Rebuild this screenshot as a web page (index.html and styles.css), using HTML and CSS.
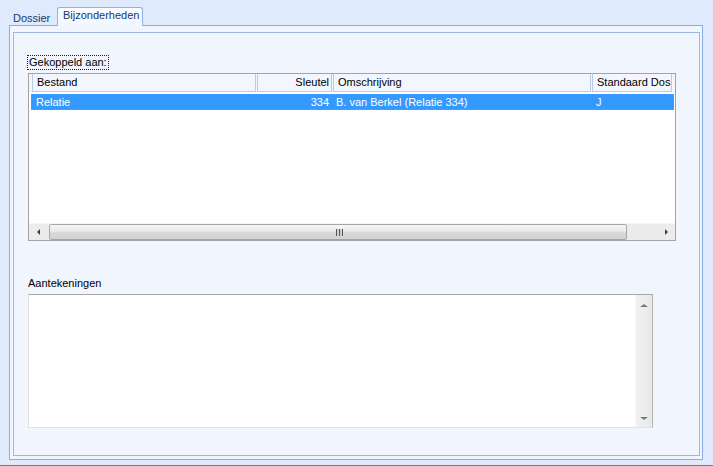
FILE: index.html
```html
<!DOCTYPE html>
<html>
<head>
<meta charset="utf-8">
<link rel="stylesheet" href="styles.css">
</head>
<body>
<div class="window">
  <div class="tabs">
    <div class="tab">Dossier</div>
    <div class="tab tab-active">Bijzonderheden</div>
  </div>
  <div class="panel">
    <div class="inner">
      <div class="group-label"><span class="focus">Gekoppeld aan:</span></div>
      <div class="list">
        <div class="list-header">
          <div class="hcell c1">Bestand</div>
          <div class="hcell c2 right">Sleutel</div>
          <div class="hcell c3">Omschrijving</div>
          <div class="hcell c4">Standaard Dos</div>
        </div>
        <div class="list-body">
          <div class="row selected">
            <div class="cell c1">Relatie</div>
            <div class="cell c2 right">334</div>
            <div class="cell c3">B. van Berkel (Relatie 334)</div>
            <div class="cell c4">J</div>
          </div>
        </div>
        <div class="hscroll">
          <div class="sbtn"><span class="arrow-left"></span></div>
          <div class="thumb"><span class="grip"></span></div>
          <div class="track"><span class="arrow-right"></span></div>
        </div>
      </div>
      <div class="notes-label">Aantekeningen</div>
      <div class="memo">
        <div class="memo-text"></div>
        <div class="vscroll">
          <span class="arrow-up"></span>
          <span class="arrow-down"></span>
        </div>
      </div>
    </div>
  </div>
</div>
</body>
</html>
```

FILE: styles.css
```css
* { box-sizing: border-box; }
html, body { margin: 0; padding: 0; }
body {
  font-family: "Liberation Sans", Arial, sans-serif;
  font-size: 11px;
  color: #000;
  background: #dfeafc;
}
.window {
  width: 713px;
  height: 466px;
  background: #dfeafc;
  border-bottom: 1px solid #5b7db3;
  overflow: hidden;
}
.tabs {
  height: 25px;
  display: flex;
  align-items: flex-end;
  padding-left: 9px;
}
.tab {
  height: 16px;
  padding: 3px 5px 0 4px;
  line-height: 13px;
  color: #15396f;
  width: 48px;
}
.tab-active {
  position: relative;
  z-index: 2;
  width: 86px;
  height: 19px;
  margin-bottom: -1px;
  padding: 1px 0 0 5px;
  border: 1px solid #8fb2e2;
  border-bottom: none;
  border-radius: 3px 3px 0 0;
  background: linear-gradient(#fbfdff, #f1f6ff);
}
.panel {
  margin: 0 10px 0 9px;
  height: 435px;
  border: 1px solid #8aaee0;
  background: #f1f6fe;
  padding: 6px 2px 3px 3px;
}
.inner {
  height: 424px;
  border: 1px solid #9ab9e4;
  background: #f0f5fe;
  padding: 22px 0 0 14px;
}
.group-label {
  height: 15px;
  margin-left: -1px;
}
.focus {
  display: inline-block;
  border: 1px dotted #222;
  padding: 0 1px 0 1px;
  line-height: 13px;
  height: 15px;
}
.list {
  margin-top: 3px;
  width: 648px;
  height: 168px;
  border: 1px solid #a3a3a3;
  background: #fff;
  display: flex;
  flex-direction: column;
}
.list-header {
  height: 18px;
  display: flex;
  gap: 1px;
  padding-left: 3px;
  background: #f3f7fd;
}
.hcell {
  height: 18px;
  border: 1px solid #b9cbe6;
  border-top: none;
  background: #f3f7fd;
  line-height: 16px;
  padding: 0 2px 0 4px;
  white-space: nowrap;
  overflow: hidden;
}
.c1 { width: 224px; }
.c2 { width: 75px; }
.c3 { width: 258px; }
.c4 { width: 80px; }
.right { text-align: right; }
.hcell.right { padding-right: 2px; }
.hcell.c4 { padding: 0 0 0 4px; }
.list-body {
  flex: 1;
  padding-top: 2px;
}
.row {
  display: flex;
  gap: 1px;
  height: 16px;
  margin: 0 1px 0 2px;
  border: 1px dotted #d9822b;
  background: #3399ff;
  color: #fff;
  line-height: 14px;
}
.row .cell {
  padding-left: 4px;
  white-space: nowrap;
  overflow: hidden;
}
.row .c1 { width: 223px; padding-left: 4px; }
.row .c2.right { padding-right: 2px; padding-left: 0; }
.row .c4 { padding-left: 5px; }
.hscroll {
  height: 17px;
  display: flex;
  background: #ebebeb;
  border-top: 1px solid #f5f5f5;
}
.sbtn {
  width: 20px;
  display: flex;
  align-items: center;
  justify-content: center;
  background: #ececec;
}
.arrow-left {
  width: 0; height: 0;
  border-top: 3px solid transparent;
  border-bottom: 3px solid transparent;
  border-right: 3px solid #3e3e3e;
  margin-right: 2px;
}
.arrow-right {
  width: 0; height: 0;
  border-top: 3px solid transparent;
  border-bottom: 3px solid transparent;
  border-left: 3px solid #3e3e3e;
  margin-right: 7px;
}
.thumb {
  width: 578px;
  height: 16px;
  border: 1px solid #a6a6a6;
  border-radius: 2px;
  background: linear-gradient(#f6f6f6 0%, #e9e9e9 45%, #d9d9d9 55%, #d2d2d2 100%);
  display: flex;
  align-items: center;
  justify-content: center;
}
.grip {
  width: 7px;
  height: 7px;
  margin-left: 2px;
  background: repeating-linear-gradient(90deg, #555 0 1px, #d0d0d0 1px 3px);
}
.track {
  flex: 1;
  display: flex;
  align-items: center;
  justify-content: flex-end;
  background: #ececec;
}
.notes-label {
  margin-top: 36px;
  height: 13px;
  line-height: 13px;
}
.memo {
  margin-top: 4px;
  width: 625px;
  height: 134px;
  display: flex;
  background: #fff;
  border-top: 1px solid #a8a8a8;
  border-right: 1px solid #b4b4b4;
  border-left: 1px solid #e1e1e1;
  border-bottom: 1px solid #e1e1e1;
}
.memo-text { flex: 1; }
.vscroll {
  width: 17px;
  background: linear-gradient(90deg, #f2f2f2, #e8e8e8);
  border-left: 1px solid #f6f6f6;
  display: flex;
  flex-direction: column;
  align-items: center;
  justify-content: space-between;
  padding: 9px 0 7px 0;
}
.arrow-up {
  width: 0; height: 0;
  border-left: 4px solid transparent;
  border-right: 4px solid transparent;
  border-bottom: 3px solid #7a7a7a;
}
.arrow-down {
  width: 0; height: 0;
  border-left: 4px solid transparent;
  border-right: 4px solid transparent;
  border-top: 3px solid #7a7a7a;
}
```
